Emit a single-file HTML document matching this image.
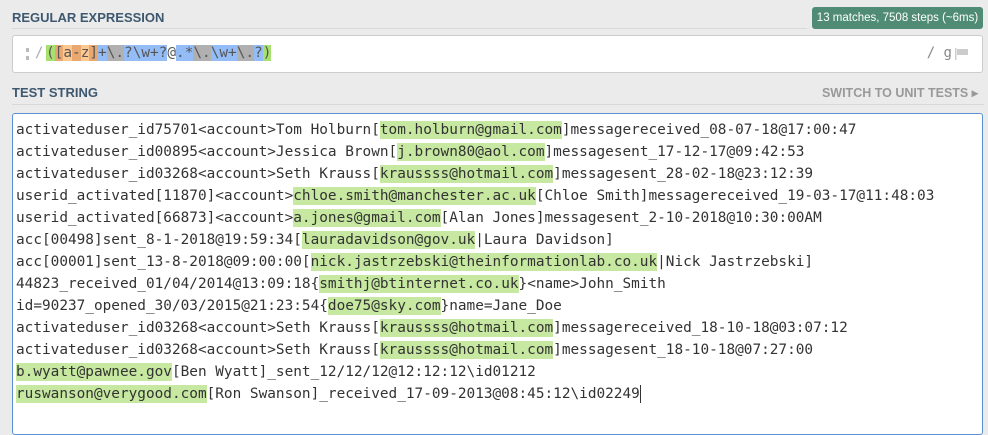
<!DOCTYPE html>
<html><head><meta charset="utf-8"><style>
body{margin:0;width:988px;height:420px;background:#ebebeb;font-family:"Liberation Sans",sans-serif;overflow:hidden;position:relative}
.h{position:absolute;left:12px;font-weight:bold;font-size:13px;color:#3e5870;letter-spacing:0}
.rule{position:absolute;left:12px;width:972px;height:1px;background:#d8d8d8}
.badge{position:absolute;left:812px;top:7px;width:171px;height:22px;background:#508c75;color:#fff;font-size:11.5px;line-height:22px;text-align:center;border-radius:3px}
.rx{position:absolute;left:12px;top:35px;width:969px;height:36px;background:#fff;border:1px solid #ccc;border-radius:3px}
.mono{font-family:"DejaVu Sans Mono","Liberation Mono",monospace}
.rxt{position:absolute;left:33px;top:8px;font-size:14.4px;line-height:19px;color:#555;white-space:pre}
.ts{position:absolute;left:12px;top:113px;width:969px;height:320px;background:#fff;border:1px solid #5b92d4;border-radius:3px}
.tt{position:absolute;left:3px;top:5px;font-size:14.4px;line-height:22px;color:#333;white-space:pre}
.m{background:#c6e8a0;padding:1px 0}
.sw{position:absolute;right:10px;top:85px;font-size:12.5px;font-weight:bold;color:#999}
.cur{display:inline-block;width:0;height:18px;border-left:1px solid #333;vertical-align:middle}
</style></head><body>
<div class="h" style="top:10px">REGULAR EXPRESSION</div>
<div class="badge">13 matches, 7508 steps (~6ms)</div>
<div class="rule" style="top:28px;width:795px"></div>
<div class="rx">
<div style="position:absolute;left:13px;top:12px;width:3px;height:12px;border-left:3px dotted #bbb"></div>
<span class="mono" style="position:absolute;left:22px;top:9px;font-size:14px;color:#aaa">/</span>
<div class="rxt mono"><span style="background:#a8e070">(</span><span style="background:#e8a870">[</span><span style="background:#ffc890">a</span><span style="background:#e8a870">-</span><span style="background:#ffc890">z</span><span style="background:#e8a870">]</span><span style="background:#94bdf8">+</span><span style="background:#b0b0b0">\.</span><span style="background:#94bdf8">?\w+?</span><span style="background:#fff">@</span><span style="background:#94bdf8">.*</span><span style="background:#b0b0b0">\.</span><span style="background:#94bdf8">\w+</span><span style="background:#b0b0b0">\.</span><span style="background:#94bdf8">?</span><span style="background:#a8e070">)</span></div>
<span class="mono" style="position:absolute;right:30px;top:9px;font-size:14px;color:#888">/ g</span>
<svg style="position:absolute;right:13px;top:12px" width="14" height="12"><rect x="0" y="0" width="1.5" height="12" fill="#ccc"/><path d="M2 1h11v6h-11z" fill="#ccc"/></svg>
</div>
<div class="h" style="top:85px">TEST STRING</div>
<div class="sw">SWITCH TO UNIT TESTS &#9656;</div>
<div class="rule" style="top:104px"></div>
<div class="ts"><div class="tt mono">activateduser_id75701&lt;account&gt;Tom Holburn[<span class="m">tom.holburn@gmail.com</span>]messagereceived_08-07-18@17:00:47
activateduser_id00895&lt;account&gt;Jessica Brown[<span class="m">j.brown80@aol.com</span>]messagesent_17-12-17@09:42:53
activateduser_id03268&lt;account&gt;Seth Krauss[<span class="m">kraussss@hotmail.com</span>]messagesent_28-02-18@23:12:39
userid_activated[11870]&lt;account&gt;<span class="m">chloe.smith@manchester.ac.uk</span>[Chloe Smith]messagereceived_19-03-17@11:48:03
userid_activated[66873]&lt;account&gt;<span class="m">a.jones@gmail.com</span>[Alan Jones]messagesent_2-10-2018@10:30:00AM
acc[00498]sent_8-1-2018@19:59:34[<span class="m">lauradavidson@gov.uk</span>|Laura Davidson]
acc[00001]sent_13-8-2018@09:00:00[<span class="m">nick.jastrzebski@theinformationlab.co.uk</span>|Nick Jastrzebski]
44823_received_01/04/2014@13:09:18{<span class="m">smithj@btinternet.co.uk</span>}&lt;name&gt;John_Smith
id=90237_opened_30/03/2015@21:23:54{<span class="m">doe75@sky.com</span>}name=Jane_Doe
activateduser_id03268&lt;account&gt;Seth Krauss[<span class="m">kraussss@hotmail.com</span>]messagereceived_18-10-18@03:07:12
activateduser_id03268&lt;account&gt;Seth Krauss[<span class="m">kraussss@hotmail.com</span>]messagesent_18-10-18@07:27:00
<span class="m">b.wyatt@pawnee.gov</span>[Ben Wyatt]_sent_12/12/12@12:12:12\id01212
<span class="m">ruswanson@verygood.com</span>[Ron Swanson]_received_17-09-2013@08:45:12\id02249<span class="cur"></span></div></div>
</body></html>
